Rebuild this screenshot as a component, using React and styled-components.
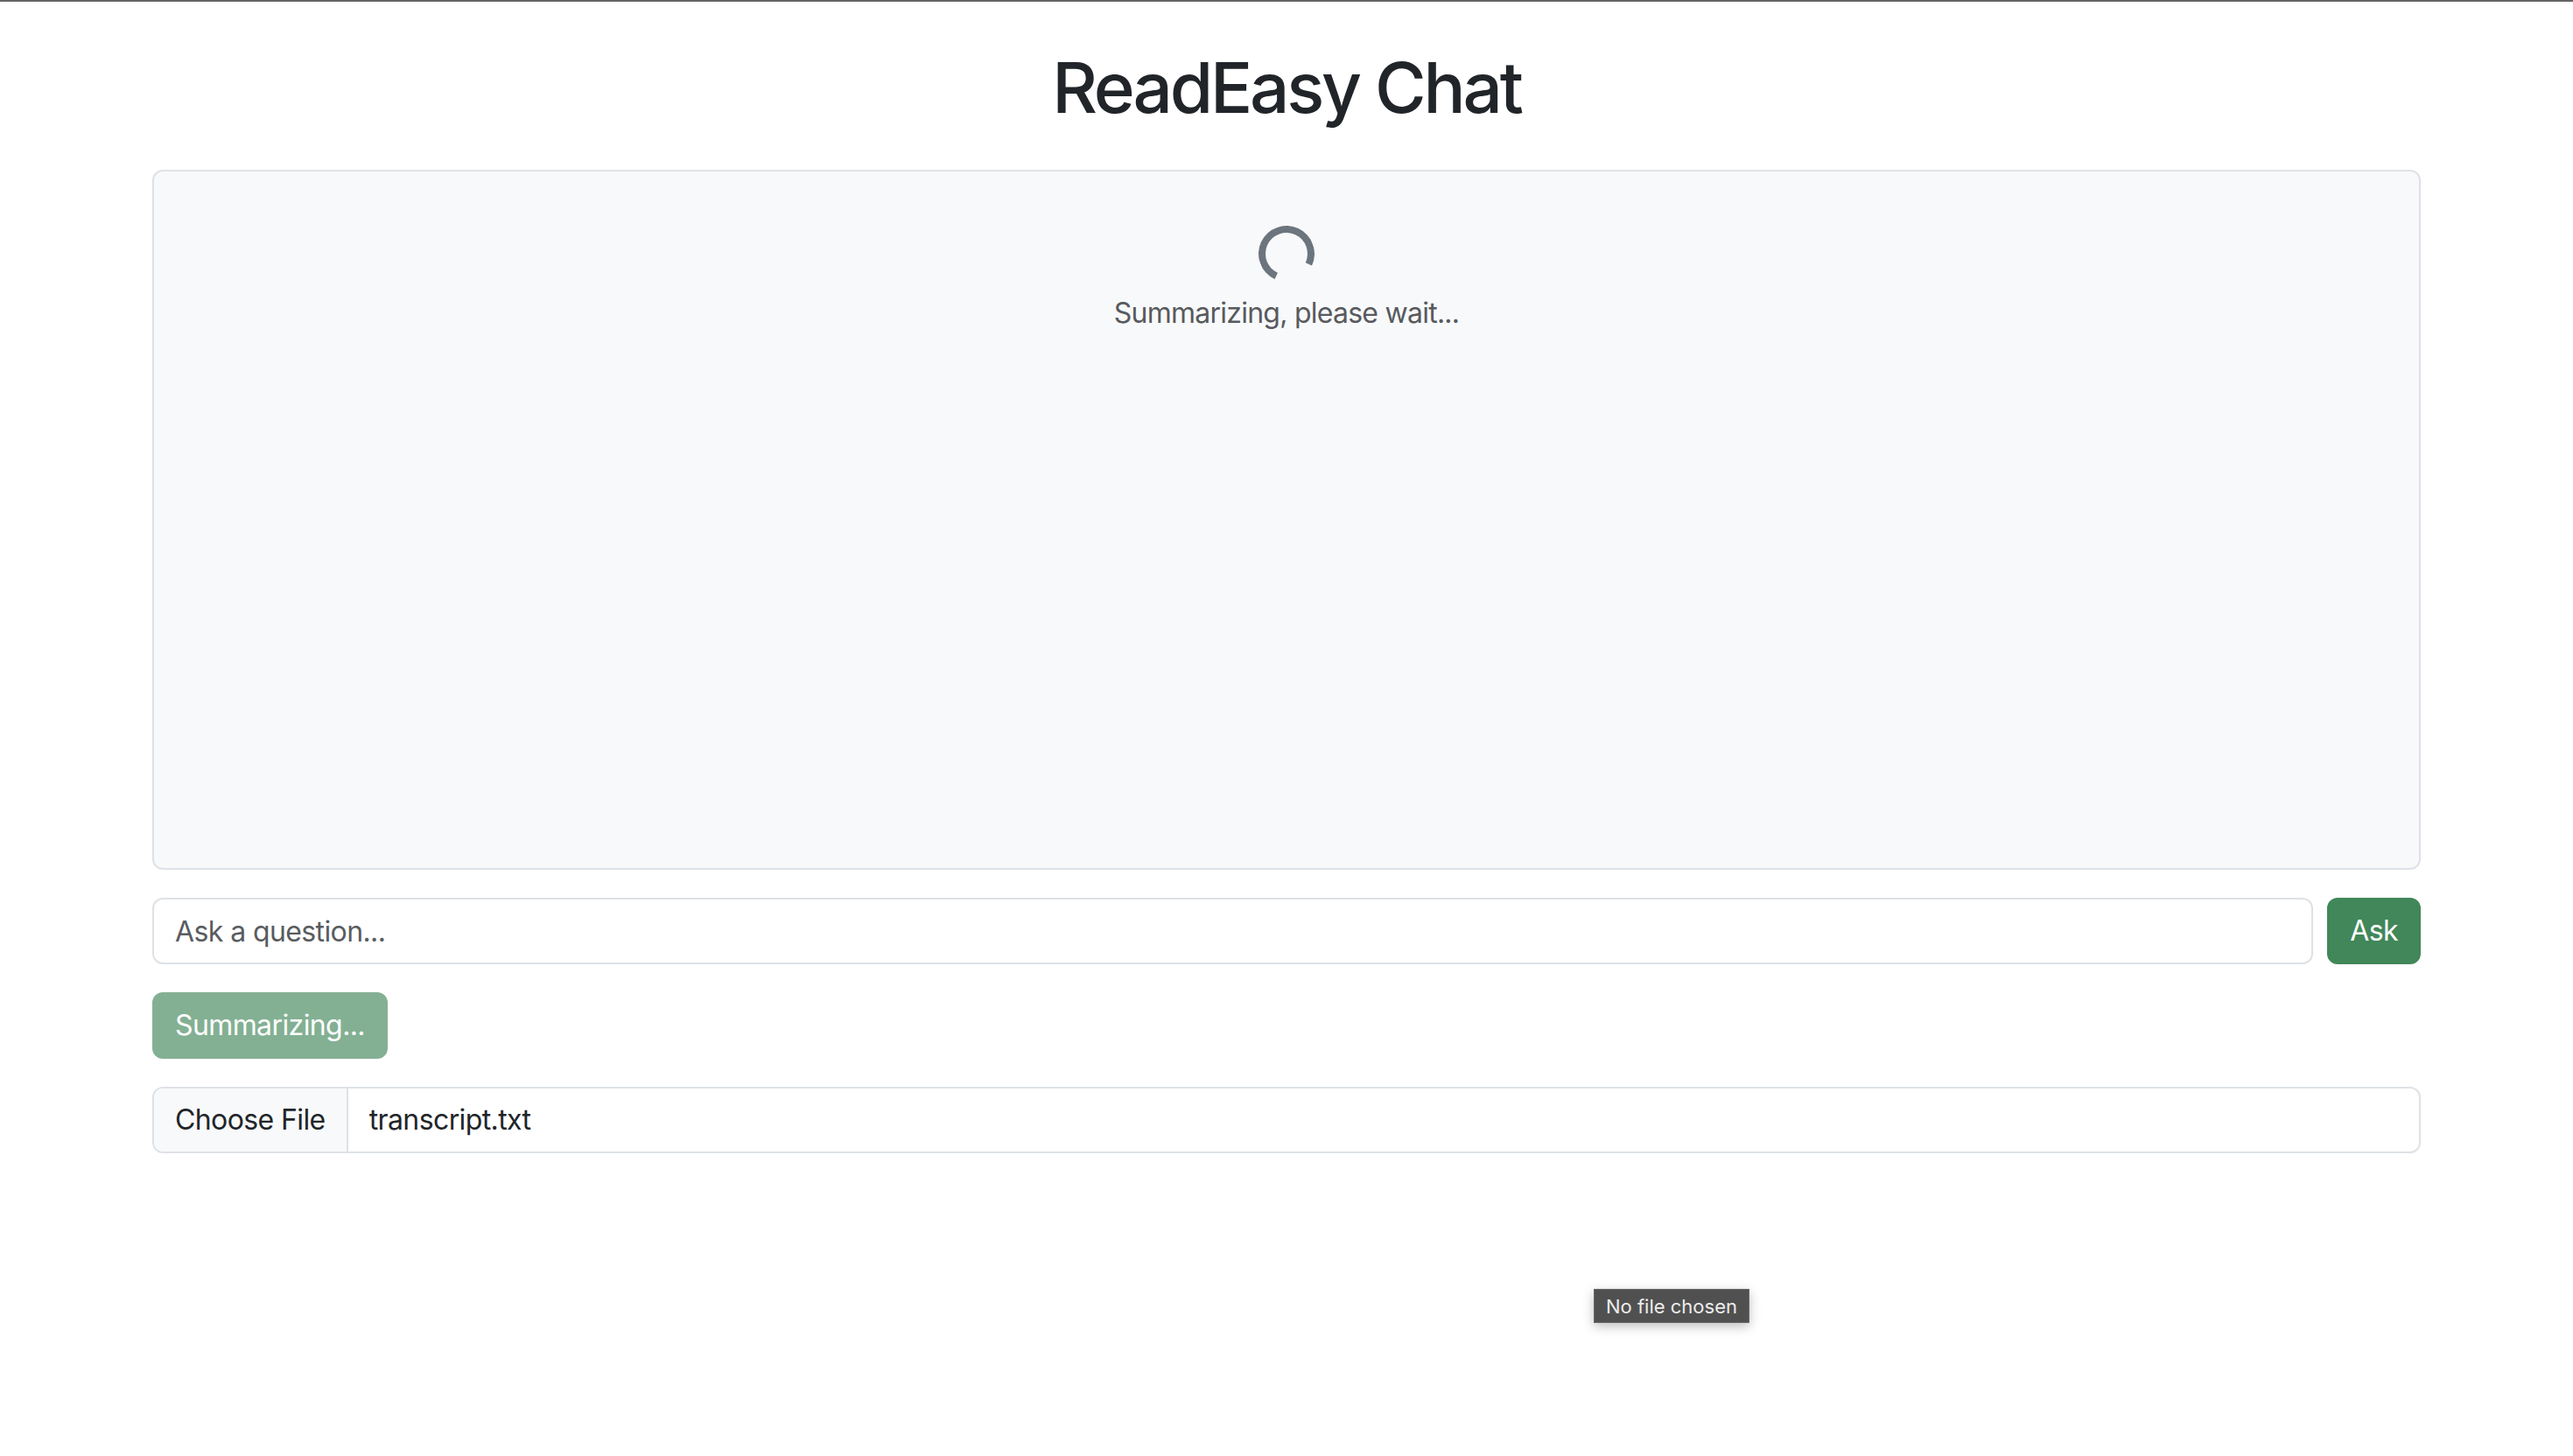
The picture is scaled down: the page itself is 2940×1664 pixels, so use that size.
import React from "react";
import styled, { createGlobalStyle } from "styled-components";

const GlobalStyle = createGlobalStyle`
  html, body {
    margin: 0;
    padding: 0;
    background: #ffffff;
    font-family: Inter, "Noto Sans", "Liberation Sans", sans-serif;
    color: #212529;
  }
  * { box-sizing: border-box; }
`;

const Page = styled.div`
  position: relative;
  min-height: 1664px;
  border-top: 2px solid #646464;
`;

const Container = styled.main`
  width: 2592px;
  margin: 0 auto;
  display: flex;
  flex-direction: column;
`;

const Title = styled.h1`
  margin: 50px 0 46px;
  font-size: 80px;
  line-height: 96px;
  font-weight: 500;
  text-align: center;
  letter-spacing: -3.2px;
  color: #212529;
`;

const ChatBox = styled.section`
  height: 800px;
  border: 2px solid #dee2e6;
  border-radius: 12px;
  background: #f8f9fa;
  padding: 32px;
  display: flex;
  flex-direction: column;
  align-items: center;
`;

const Spinner = styled.div`
  margin-top: 30px;
  width: 64px;
  height: 64px;
  border: 8px solid #6c757d;
  border-right-color: transparent;
  border-radius: 50%;
  transform: rotate(70deg);
`;

const LoadingText = styled.p`
  margin: 12px 0 0;
  font-size: 32px;
  line-height: 48px;
  letter-spacing: -0.75px;
  color: #575a5e;
`;

const AskRow = styled.form`
  margin-top: 32px;
  display: flex;
  gap: 16px;
`;

const QuestionInput = styled.input`
  flex: 1;
  height: 76px;
  padding: 12px 24px;
  border: 2px solid #dee2e6;
  border-radius: 12px;
  font-family: inherit;
  font-size: 32px;
  line-height: 48px;
  letter-spacing: -0.6px;
  color: #212529;
  background: #fff;
  outline: none;
  &::placeholder { color: #595c5f; }
`;

const GreenButton = styled.button`
  height: 76px;
  padding: 12px 24px;
  border: 2px solid #41875a;
  border-radius: 12px;
  background: #41875a;
  color: #ffffff;
  font-family: inherit;
  font-size: 32px;
  line-height: 48px;
  letter-spacing: -0.6px;
  opacity: ${(p) => (p.disabled ? 0.65 : 1)};
  align-self: ${(p) => (p.$start ? "flex-start" : "auto")};
  cursor: pointer;
`;

const ActionRow = styled.div`
  margin-top: 32px;
  display: flex;
`;

const FileField = styled.label`
  margin-top: 32px;
  height: 76px;
  display: flex;
  align-items: stretch;
  border: 2px solid #dee2e6;
  border-radius: 12px;
  overflow: hidden;
  background: #fff;
  font-size: 32px;
  line-height: 48px;
  letter-spacing: -0.6px;
  color: #212529;
`;

const FileButton = styled.span`
  display: flex;
  align-items: center;
  padding: 0 24px;
  background: #f8f9fa;
  border-right: 2px solid #dee2e6;
`;

const FileName = styled.span`
  display: flex;
  align-items: center;
  padding: 0 24px;
`;

const Tooltip = styled.div`
  position: absolute;
  left: 1821px;
  top: 1471px;
  height: 39px;
  padding: 0 13px;
  display: flex;
  align-items: center;
  background: #505050;
  border: 1px solid #6a6a6a;
  color: #ececec;
  font-size: 22px;
  box-shadow: 0 4px 12px rgba(0, 0, 0, 0.25);
`;

export default function App() {
  return (
    <Page>
      <GlobalStyle />
      <Container>
        <Title>ReadEasy Chat</Title>
        <ChatBox>
          <Spinner role="status" aria-label="Loading" />
          <LoadingText>Summarizing, please wait...</LoadingText>
        </ChatBox>
        <AskRow onSubmit={(e) => e.preventDefault()}>
          <QuestionInput placeholder="Ask a question..." />
          <GreenButton type="submit">Ask</GreenButton>
        </AskRow>
        <ActionRow>
          <GreenButton disabled $start>Summarizing...</GreenButton>
        </ActionRow>
        <FileField>
          <FileButton>Choose File</FileButton>
          <FileName>transcript.txt</FileName>
        </FileField>
      </Container>
      <Tooltip>No file chosen</Tooltip>
    </Page>
  );
}
